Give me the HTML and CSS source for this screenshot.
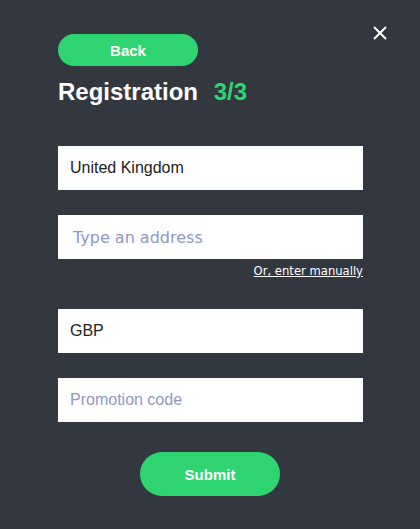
FILE: index.html
```html
<!DOCTYPE html>
<html lang="en">
  <head>
    <meta charset="UTF-8" />
    <title>Registration</title>
    <link rel="stylesheet" href="styles.css">
  </head>
  <body>
    <div class="modal">
      <button class="close-btn" aria-label="Close">
        <svg width="14" height="14" viewBox="0 0 14 14">
          <path d="M1 1L13 13M13 1L1 13" stroke="#ffffff" stroke-width="2" fill="none" />
        </svg>
      </button>
      <form class="reg-form">
        <button type="button" class="back-btn">Back</button>
        <h1 class="reg-title">Registration <span>3/3</span></h1>

        <div class="field"><input type="text" value="United Kingdom" /></div>

        <div class="field address">
          <input type="text" class="poppins" placeholder="Type an address" />
          <a href="#" class="manual-link">Or, enter manually</a>
        </div>

        <div class="field"><input type="text" value="GBP" /></div>

        <div class="field"><input type="text" placeholder="Promotion code" /></div>

        <div class="submit-wrap"><button type="submit" class="submit-btn">Submit</button></div>
      </form>
    </div>
  </body>
</html>
```

FILE: styles.css
```css
* {
  box-sizing: border-box;
}

body {
  margin: 0;
  background-color: #33373f;
  font-family: "Liberation Sans", Arial, sans-serif;
}

.modal {
  position: relative;
  width: 420px;
  height: 529px;
  padding: 34px 57px 0 58px;
}

.close-btn {
  position: absolute;
  top: 26px;
  right: 32px;
  width: 16px;
  height: 16px;
  padding: 0;
  border: none;
  background: none;
  cursor: pointer;
}

.back-btn {
  display: block;
  width: 140px;
  height: 32px;
  border: none;
  border-radius: 16px;
  background-color: #2dd46f;
  color: #ffffff;
  font-family: inherit;
  font-size: 15px;
  font-weight: bold;
  cursor: pointer;
}

.reg-title {
  margin: 9px 0 0;
  height: 34px;
  color: #ffffff;
  font-size: 24px;
  font-weight: bold;
  line-height: 34px;
}

.reg-title > span {
  margin-left: 9px;
  color: #2dd46f;
}

.field {
  margin-top: 25px;
}

.reg-title + .field {
  margin-top: 37px;
}

.field input {
  display: block;
  width: 305px;
  height: 44px;
  padding: 0 12px;
  border: none;
  outline: none;
  background: #ffffff;
  color: #222222;
  font-family: "Liberation Sans", Arial, sans-serif;
  font-size: 16px;
}

.field input::placeholder {
  color: #8e98c3;
}

.field input.poppins {
  padding-left: 15px;
  font-family: "DejaVu Sans", sans-serif;
  font-size: 16px;
}

.address {
  display: flex;
  flex-direction: column;
  align-items: flex-end;
}

.manual-link {
  margin-top: 5px;
  color: #ffffff;
  font-family: "DejaVu Sans", sans-serif;
  font-size: 11.6px;
  line-height: 14px;
  text-decoration: underline;
}

.address + .field {
  margin-top: 31px;
}

.submit-wrap {
  display: flex;
  justify-content: center;
  margin-top: 30px;
  padding-right: 1px;
}

.submit-btn {
  width: 140px;
  height: 44px;
  border: none;
  border-radius: 22px;
  background-color: #2dd46f;
  color: #ffffff;
  font-family: inherit;
  font-size: 15px;
  font-weight: bold;
  cursor: pointer;
}
```
